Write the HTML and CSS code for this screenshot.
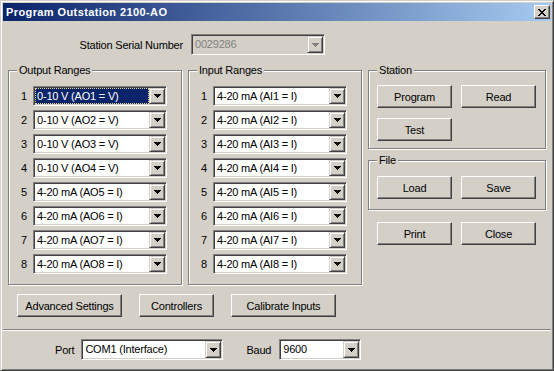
FILE: index.html
```html
<!DOCTYPE html>
<html lang="en">
<head>
<meta charset="UTF-8">
<meta name="viewport" content="width=device-width, initial-scale=1.0">
<title>Program Outstation 2100-AO</title>
<link rel="stylesheet" href="styles.css">
</head>
<body>
  <div class="window">
    <div class="titlebar">
      <span class="title">Program Outstation 2100-AO</span>
      <span class="close-btn">
        <svg width="8" height="7" viewBox="0 0 8 7"><path d="M0 0h2v1h1v1h2v-1h1v-1h2v1h-1v1h-1v1h-1v1h1v1h1v1h1v1h-2v-1h-1v-1h-2v1h-1v1h-2v-1h1v-1h1v-1h1v-1h-1v-1h-1v-1h-1z"/></svg>
      </span>
    </div>

    <div class="client">
      <div class="serial-row">
        <span class="serial-label">Station Serial Number</span>
        <div class="combo disabled">
          <span class="combo-text">0029286</span>
          <span class="combo-btn"><svg width="7" height="4" viewBox="0 0 7 4"><path d="M0 0h7v1h-1v1h-1v1h-1v1h-1v-1h-1v-1h-1v-1h-1z"/></svg></span>
        </div>
      </div>

      <div class="main">
        <div class="group ranges">
          <div class="group-title">Output Ranges</div>
          <div class="rows">
            <div class="row"><span class="num">1</span><div class="combo"><span class="combo-text selected">0-10 V (AO1 = V)</span><span class="combo-btn"><svg width="7" height="4" viewBox="0 0 7 4"><path d="M0 0h7v1h-1v1h-1v1h-1v1h-1v-1h-1v-1h-1v-1h-1z"/></svg></span></div></div>
            <div class="row"><span class="num">2</span><div class="combo"><span class="combo-text">0-10 V (AO2 = V)</span><span class="combo-btn"><svg width="7" height="4" viewBox="0 0 7 4"><path d="M0 0h7v1h-1v1h-1v1h-1v1h-1v-1h-1v-1h-1v-1h-1z"/></svg></span></div></div>
            <div class="row"><span class="num">3</span><div class="combo"><span class="combo-text">0-10 V (AO3 = V)</span><span class="combo-btn"><svg width="7" height="4" viewBox="0 0 7 4"><path d="M0 0h7v1h-1v1h-1v1h-1v1h-1v-1h-1v-1h-1v-1h-1z"/></svg></span></div></div>
            <div class="row"><span class="num">4</span><div class="combo"><span class="combo-text">0-10 V (AO4 = V)</span><span class="combo-btn"><svg width="7" height="4" viewBox="0 0 7 4"><path d="M0 0h7v1h-1v1h-1v1h-1v1h-1v-1h-1v-1h-1v-1h-1z"/></svg></span></div></div>
            <div class="row"><span class="num">5</span><div class="combo"><span class="combo-text">4-20 mA (AO5 = I)</span><span class="combo-btn"><svg width="7" height="4" viewBox="0 0 7 4"><path d="M0 0h7v1h-1v1h-1v1h-1v1h-1v-1h-1v-1h-1v-1h-1z"/></svg></span></div></div>
            <div class="row"><span class="num">6</span><div class="combo"><span class="combo-text">4-20 mA (AO6 = I)</span><span class="combo-btn"><svg width="7" height="4" viewBox="0 0 7 4"><path d="M0 0h7v1h-1v1h-1v1h-1v1h-1v-1h-1v-1h-1v-1h-1z"/></svg></span></div></div>
            <div class="row"><span class="num">7</span><div class="combo"><span class="combo-text">4-20 mA (AO7 = I)</span><span class="combo-btn"><svg width="7" height="4" viewBox="0 0 7 4"><path d="M0 0h7v1h-1v1h-1v1h-1v1h-1v-1h-1v-1h-1v-1h-1z"/></svg></span></div></div>
            <div class="row"><span class="num">8</span><div class="combo"><span class="combo-text">4-20 mA (AO8 = I)</span><span class="combo-btn"><svg width="7" height="4" viewBox="0 0 7 4"><path d="M0 0h7v1h-1v1h-1v1h-1v1h-1v-1h-1v-1h-1v-1h-1z"/></svg></span></div></div>
          </div>
        </div>

        <div class="group ranges">
          <div class="group-title">Input Ranges</div>
          <div class="rows">
            <div class="row"><span class="num">1</span><div class="combo"><span class="combo-text">4-20 mA (AI1 = I)</span><span class="combo-btn"><svg width="7" height="4" viewBox="0 0 7 4"><path d="M0 0h7v1h-1v1h-1v1h-1v1h-1v-1h-1v-1h-1v-1h-1z"/></svg></span></div></div>
            <div class="row"><span class="num">2</span><div class="combo"><span class="combo-text">4-20 mA (AI2 = I)</span><span class="combo-btn"><svg width="7" height="4" viewBox="0 0 7 4"><path d="M0 0h7v1h-1v1h-1v1h-1v1h-1v-1h-1v-1h-1v-1h-1z"/></svg></span></div></div>
            <div class="row"><span class="num">3</span><div class="combo"><span class="combo-text">4-20 mA (AI3 = I)</span><span class="combo-btn"><svg width="7" height="4" viewBox="0 0 7 4"><path d="M0 0h7v1h-1v1h-1v1h-1v1h-1v-1h-1v-1h-1v-1h-1z"/></svg></span></div></div>
            <div class="row"><span class="num">4</span><div class="combo"><span class="combo-text">4-20 mA (AI4 = I)</span><span class="combo-btn"><svg width="7" height="4" viewBox="0 0 7 4"><path d="M0 0h7v1h-1v1h-1v1h-1v1h-1v-1h-1v-1h-1v-1h-1z"/></svg></span></div></div>
            <div class="row"><span class="num">5</span><div class="combo"><span class="combo-text">4-20 mA (AI5 = I)</span><span class="combo-btn"><svg width="7" height="4" viewBox="0 0 7 4"><path d="M0 0h7v1h-1v1h-1v1h-1v1h-1v-1h-1v-1h-1v-1h-1z"/></svg></span></div></div>
            <div class="row"><span class="num">6</span><div class="combo"><span class="combo-text">4-20 mA (AI6 = I)</span><span class="combo-btn"><svg width="7" height="4" viewBox="0 0 7 4"><path d="M0 0h7v1h-1v1h-1v1h-1v1h-1v-1h-1v-1h-1v-1h-1z"/></svg></span></div></div>
            <div class="row"><span class="num">7</span><div class="combo"><span class="combo-text">4-20 mA (AI7 = I)</span><span class="combo-btn"><svg width="7" height="4" viewBox="0 0 7 4"><path d="M0 0h7v1h-1v1h-1v1h-1v1h-1v-1h-1v-1h-1v-1h-1z"/></svg></span></div></div>
            <div class="row"><span class="num">8</span><div class="combo"><span class="combo-text">4-20 mA (AI8 = I)</span><span class="combo-btn"><svg width="7" height="4" viewBox="0 0 7 4"><path d="M0 0h7v1h-1v1h-1v1h-1v1h-1v-1h-1v-1h-1v-1h-1z"/></svg></span></div></div>
          </div>
        </div>

        <div class="side">
          <div class="group station">
            <div class="group-title">Station</div>
            <div class="btn-grid">
              <button class="btn">Program</button>
              <button class="btn">Read</button>
              <button class="btn">Test</button>
            </div>
          </div>
          <div class="group file">
            <div class="group-title">File</div>
            <div class="btn-grid">
              <button class="btn">Load</button>
              <button class="btn">Save</button>
            </div>
          </div>
          <div class="btn-grid loose">
            <button class="btn">Print</button>
            <button class="btn">Close</button>
          </div>
        </div>
      </div>

      <div class="actions">
        <button class="btn wide">Advanced Settings</button>
        <button class="btn">Controllers</button>
        <button class="btn wide">Calibrate Inputs</button>
      </div>

      <div class="separator"></div>

      <div class="port-row">
        <span class="port-label">Port</span>
        <div class="combo port">
          <span class="combo-text">COM1 (Interface)</span>
          <span class="combo-btn"><svg width="7" height="4" viewBox="0 0 7 4"><path d="M0 0h7v1h-1v1h-1v1h-1v1h-1v-1h-1v-1h-1v-1h-1z"/></svg></span>
        </div>
        <span class="baud-label">Baud</span>
        <div class="combo baud">
          <span class="combo-text">9600</span>
          <span class="combo-btn"><svg width="7" height="4" viewBox="0 0 7 4"><path d="M0 0h7v1h-1v1h-1v1h-1v1h-1v-1h-1v-1h-1v-1h-1z"/></svg></span>
        </div>
      </div>
    </div>
  </div>
</body>
</html>
```

FILE: styles.css
```css
/* Classic dialog look */
body {
  margin: 0;
  background: #d4d0c8;
  font-family: "Liberation Sans", Arial, sans-serif;
  font-size: 11px;
  letter-spacing: -0.2px;
  color: #000;
}

.window {
  width: 554px;
  height: 371px;
  box-sizing: border-box;
  border: 1px solid;
  border-color: #d4d0c8 #404040 #404040 #d4d0c8;
  box-shadow: inset 1px 1px #fff, inset -1px -1px #808080;
  padding: 2px;
}

/* Title bar */
.titlebar {
  height: 18px;
  display: flex;
  align-items: center;
  justify-content: space-between;
  padding: 0 1px 0 3px;
  background: linear-gradient(to right, #0a246a, #a6caf0);
  color: #fff;
  font-weight: bold;
  letter-spacing: 0.4px;
}

.close-btn {
  width: 16px;
  height: 14px;
  box-sizing: border-box;
  display: flex;
  align-items: center;
  justify-content: center;
  background: #d4d0c8;
  border: 1px solid;
  border-color: #fff #404040 #404040 #fff;
  box-shadow: inset -1px -1px #808080;
}

.client {
  padding: 0 5px;
}

/* Combo boxes */
.combo {
  width: 134px;
  height: 20px;
  box-sizing: border-box;
  display: flex;
  padding: 1px;
  background: #fff;
  border: 1px solid;
  border-color: #808080 #fff #fff #808080;
  box-shadow: inset 1px 1px #404040, inset -1px -1px #d4d0c8;
}

.combo-text {
  flex: 1;
  padding-left: 2px;
  line-height: 16px;
  white-space: nowrap;
  overflow: hidden;
}

.combo-text.selected {
  background: #0a246a;
  color: #fff;
  padding-left: 1px;
  border: 1px dotted #e8d890;
  line-height: 14px;
}

.combo-btn {
  width: 16px;
  box-sizing: border-box;
  display: flex;
  align-items: center;
  justify-content: center;
  background: #d4d0c8;
  border: 1px solid;
  border-color: #d4d0c8 #404040 #404040 #d4d0c8;
  box-shadow: inset 1px 1px #fff, inset -1px -1px #808080;
}

.combo.disabled {
  background: #d4d0c8;
  color: #808080;
}

.combo.disabled svg {
  fill: #808080;
}

/* Serial number */
.serial-row {
  display: flex;
  align-items: center;
  margin-top: 13px;
}

.serial-label {
  width: 175px;
  margin-right: 8px;
  text-align: right;
}

.serial-row .combo {
  height: 21px;
}

/* Group boxes */
.main {
  display: flex;
  gap: 6px;
  margin-top: 15px;
}

.group {
  border: 1px solid #808080;
  box-shadow: inset 1px 1px #fff, 1px 1px #fff;
}

.group-title {
  width: max-content;
  margin: -7px 0 0 8px;
  padding: 0 2px;
  line-height: 13px;
  background: #d4d0c8;
}

.ranges {
  width: 174px;
  height: 215px;
  box-sizing: border-box;
}

.rows {
  display: flex;
  flex-direction: column;
  gap: 4px;
  padding: 9px 0 0 12px;
}

.row {
  display: flex;
  align-items: center;
}

.num {
  width: 12px;
}

/* Right hand column */
.side {
  width: 178px;
}

.btn-grid {
  display: grid;
  grid-template-columns: 75px 75px;
  column-gap: 9px;
  row-gap: 10px;
  padding-left: 8px;
}

.station {
  height: 79px;
  box-sizing: border-box;
}

.station .btn-grid {
  margin-top: 8px;
}

.file {
  height: 50px;
  box-sizing: border-box;
  margin-top: 11px;
}

.file .btn-grid {
  margin-top: 9px;
}

.btn-grid.loose {
  margin-top: 12px;
  padding-left: 9px;
}

.btn {
  height: 23px;
  padding: 0;
  font: inherit;
  letter-spacing: inherit;
  color: #000;
  background: #d4d0c8;
  border: 1px solid;
  border-color: #fff #404040 #404040 #fff;
  box-shadow: inset -1px -1px #808080;
}

.actions {
  display: flex;
  gap: 17px;
  margin-top: 9px;
  padding-left: 9px;
}

.actions .btn {
  width: 75px;
}

.actions .btn.wide {
  width: 105px;
}

.separator {
  margin: 12px -5px 0;
  height: 1px;
  border-top: 1px solid #808080;
  background: #fff;
}

/* Port settings */
.port-row {
  display: flex;
  align-items: center;
  margin-top: 8px;
  padding-left: 47px;
}

.port-row .combo {
  height: 21px;
}

.port-label {
  margin-right: 7px;
}

.combo.port {
  width: 142px;
}

.baud-label {
  margin: 0 8px 0 23px;
}

.combo.baud {
  width: 82px;
}
```
